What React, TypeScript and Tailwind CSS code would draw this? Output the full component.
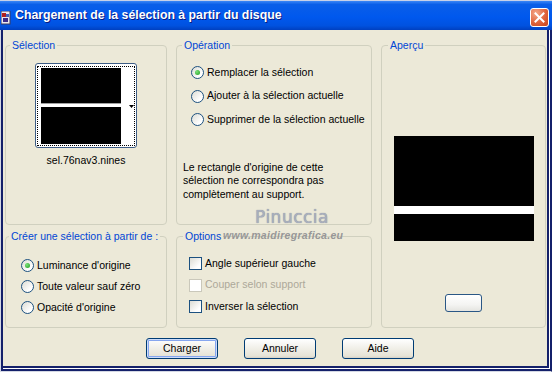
import React from 'react';

const Radio: React.FC<{ checked?: boolean; label: string; className: string }> = ({ checked, label, className }) => (
  <div className={`flex items-center gap-[3px] ${className}`}>
    <span className="w-[13px] h-[13px] shrink-0 rounded-full border border-[#1c5180] bg-[linear-gradient(135deg,#dcdcd4,#ffffff_75%)] flex items-center justify-center">
      {checked && <span className="w-[5px] h-[5px] rounded-full bg-[radial-gradient(circle_at_35%_35%,#7be27a,#1f9b1f)]" />}
    </span>
    <span>{label}</span>
  </div>
);

const Check: React.FC<{ disabled?: boolean; label: string }> = ({ disabled, label }) => (
  <div className="flex items-center gap-[3px] h-[21.5px]">
    {disabled ? (
      <span className="w-[13px] h-[13px] shrink-0 border border-[#cac8bb] bg-white" />
    ) : (
      <span className="w-[13px] h-[13px] shrink-0 border border-[#1c5180] bg-[linear-gradient(135deg,#dcdcd4,#ffffff_75%)]" />
    )}
    <span className={disabled ? 'text-[#aca899]' : ''}>{label}</span>
  </div>
);

const XpButton: React.FC<{ label: string; isDefault?: boolean }> = ({ label, isDefault }) => (
  <button
    className={`w-[72px] h-[21px] rounded-[3px] border border-[#003c74] bg-[linear-gradient(to_bottom,#ffffff,#f3f2ec_40%,#e6e3d6_90%,#d6d0c5)] text-black leading-none ${
      isDefault ? 'shadow-[inset_0_0_0_1px_#cddcfa,inset_0_0_0_2px_#86a6ef]' : ''
    }`}
  >
    {label}
  </button>
);

const App: React.FC = () => {
  return (
    <div className="relative w-[552px] h-[372px] flex flex-col overflow-hidden font-['Liberation_Sans',Arial,sans-serif] text-[10.5px] text-black">
      {/* title bar */}
      <div className="h-[30px] shrink-0 flex items-start border-t border-[#c7d0e8] bg-[linear-gradient(to_bottom,#3a86f6_0%,#0a5ee8_12%,#0058ee_55%,#0052e0_85%,#0040c0_100%)]">
        <svg width="10" height="14" viewBox="0 0 10 14" className="mt-[10px] ml-[1px]">
          <rect x="0" y="0" width="9" height="13" fill="#e8e8f0" stroke="#3a3a5a" strokeWidth="1" />
          <rect x="1" y="2" width="4" height="4" fill="#b02020" />
          <rect x="2" y="7" width="5" height="4" fill="#3a2a8a" />
          <rect x="5" y="3" width="3" height="3" fill="#4060c0" />
        </svg>
        <span className="ml-[4px] mt-[7px] text-white font-bold text-[12.3px] leading-[15px] [text-shadow:1px_1px_#0a1a80]">
          Chargement de la sélection à partir du disque
        </span>
        <div className="ml-auto mr-[3px] mt-[7px] w-[19px] h-[19px] rounded-[3px] border border-white bg-[radial-gradient(circle_at_30%_25%,#f4a88a,#e0643c_55%,#c2421a)] flex items-center justify-center">
          <svg width="11" height="11" viewBox="0 0 11 11">
            <path d="M1.5 1.5 L9.5 9.5 M9.5 1.5 L1.5 9.5" stroke="white" strokeWidth="2" strokeLinecap="square" />
          </svg>
        </div>
      </div>

      {/* frame + body */}
      <div className="flex-1 flex border-l border-r border-b border-l-[#d4d8e4] border-b-[#d4d8e4] border-r-[#14206a]">
        <div className="flex-1 flex border-l-2 border-r border-b-2 border-[#14206a]">
          <div className="flex-1 flex border-r border-b border-white">
            <div className="flex-1 flex border-r-2 border-b-2 border-[#14206a]">
              <div className="flex-1 flex flex-col bg-[#ece9d8] pt-[9px] pl-[2px]">
                <div className="grid grid-cols-[162px_196px_165px] grid-rows-[186px_98px] gap-x-[9px] gap-y-[5px]">
                  {/* Sélection */}
                  <fieldset className="h-full border border-[#d0d0bf] rounded-[4px]">
                    <legend className="ml-[4px] px-[2px] leading-[13px] text-[#0046d5]">Sélection</legend>
                    <div className="mt-[11px] mx-auto w-[102px] h-[85px] rounded-[3px] border border-[#3d5c84] bg-white pt-[2px] pb-[1px] px-[1px]">
                      <div className="w-full h-full border border-dotted border-black flex pl-[3px] py-[1px]">
                        <div className="w-[80px] flex flex-col">
                          <div className="h-[35px] bg-black" />
                          <div className="h-[1px] bg-[#a0a0a0]" />
                          <div className="h-[3px] bg-white" />
                          <div className="flex-1 bg-black" />
                        </div>
                        <div className="flex-1 flex items-center justify-end">
                          <svg width="5" height="3" viewBox="0 0 5 3">
                            <path d="M0 0 H5 L2.5 3 Z" fill="black" />
                          </svg>
                        </div>
                      </div>
                    </div>
                    <div className="mt-[6px] text-center leading-[13px]">sel.76nav3.nines</div>
                  </fieldset>

                  {/* Opération */}
                  <fieldset className="h-full border border-[#d0d0bf] rounded-[4px]">
                    <legend className="ml-[5px] px-[2px] leading-[13px] text-[#0046d5]">Opération</legend>
                    <div className="pt-[9px] pl-[14px] flex flex-col">
                      <Radio checked label="Remplacer la sélection" className="h-[23.5px]" />
                      <Radio label="Ajouter à la sélection actuelle" className="h-[23.5px]" />
                      <Radio label="Supprimer de la sélection actuelle" className="h-[23.5px]" />
                    </div>
                    <p className="mt-[29px] pl-[6px] leading-[13.5px]">
                      Le rectangle d'origine de cette
                      <br />
                      sélection ne correspondra pas
                      <br />
                      complètement au support.
                    </p>
                  </fieldset>

                  {/* Aperçu */}
                  <fieldset className="row-span-2 h-full border border-[#d0d0bf] rounded-[4px]">
                    <legend className="ml-[6px] px-[2px] leading-[13px] text-[#0046d5]">Aperçu</legend>
                    <div className="mt-[84px] mx-auto w-[140px] flex flex-col">
                      <div className="h-[70px] bg-black" />
                      <div className="h-[8px] bg-white" />
                      <div className="h-[27px] bg-black" />
                    </div>
                    <div className="mt-[53px] mx-auto w-[37px] h-[18px] rounded-[3px] border border-[#2a5785] bg-[linear-gradient(to_bottom,#ffffff,#f4f4f2_60%,#e4e4e0)]" />
                  </fieldset>

                  {/* Créer une sélection */}
                  <fieldset className="h-full border border-[#d0d0bf] rounded-[4px]">
                    <legend className="ml-[3px] px-[2px] leading-[13px] text-[#0046d5]">Créer une sélection à partir de :</legend>
                    <div className="pt-[12px] pl-[15px] flex flex-col">
                      <Radio checked label="Luminance d'origine" className="h-[21px]" />
                      <Radio label="Toute valeur sauf zéro" className="h-[21px]" />
                      <Radio label="Opacité d'origine" className="h-[21px]" />
                    </div>
                  </fieldset>

                  {/* Options */}
                  <fieldset className="h-full border border-[#d0d0bf] rounded-[4px]">
                    <legend className="ml-[6px] px-[2px] leading-[13px] text-[#0046d5]">Options</legend>
                    <div className="pt-[10px] pl-[12px] flex flex-col">
                      <Check label="Angle supérieur gauche" />
                      <Check disabled label="Couper selon support" />
                      <Check label="Inverser la sélection" />
                    </div>
                  </fieldset>
                </div>

                <div className="mt-[10px] ml-[141px] flex gap-[26px]">
                  <XpButton label="Charger" isDefault />
                  <XpButton label="Annuler" />
                  <XpButton label="Aide" />
                </div>
              </div>
            </div>
          </div>
        </div>
      </div>

      {/* watermark */}
      <div className="absolute left-[255px] top-[207px] font-['DejaVu_Sans',sans-serif] text-[17px] leading-[20px] tracking-[0.5px] text-[#a9afbd] [text-shadow:0_0_1px_#7c8294] pointer-events-none">
        Pinuccia
      </div>
      <div className="absolute left-[223px] top-[229px] text-[10.5px] leading-[12px] font-bold italic tracking-[0.3px] text-[#979797] pointer-events-none">
        www.maidiregrafica.eu
      </div>
    </div>
  );
};

export default App;
